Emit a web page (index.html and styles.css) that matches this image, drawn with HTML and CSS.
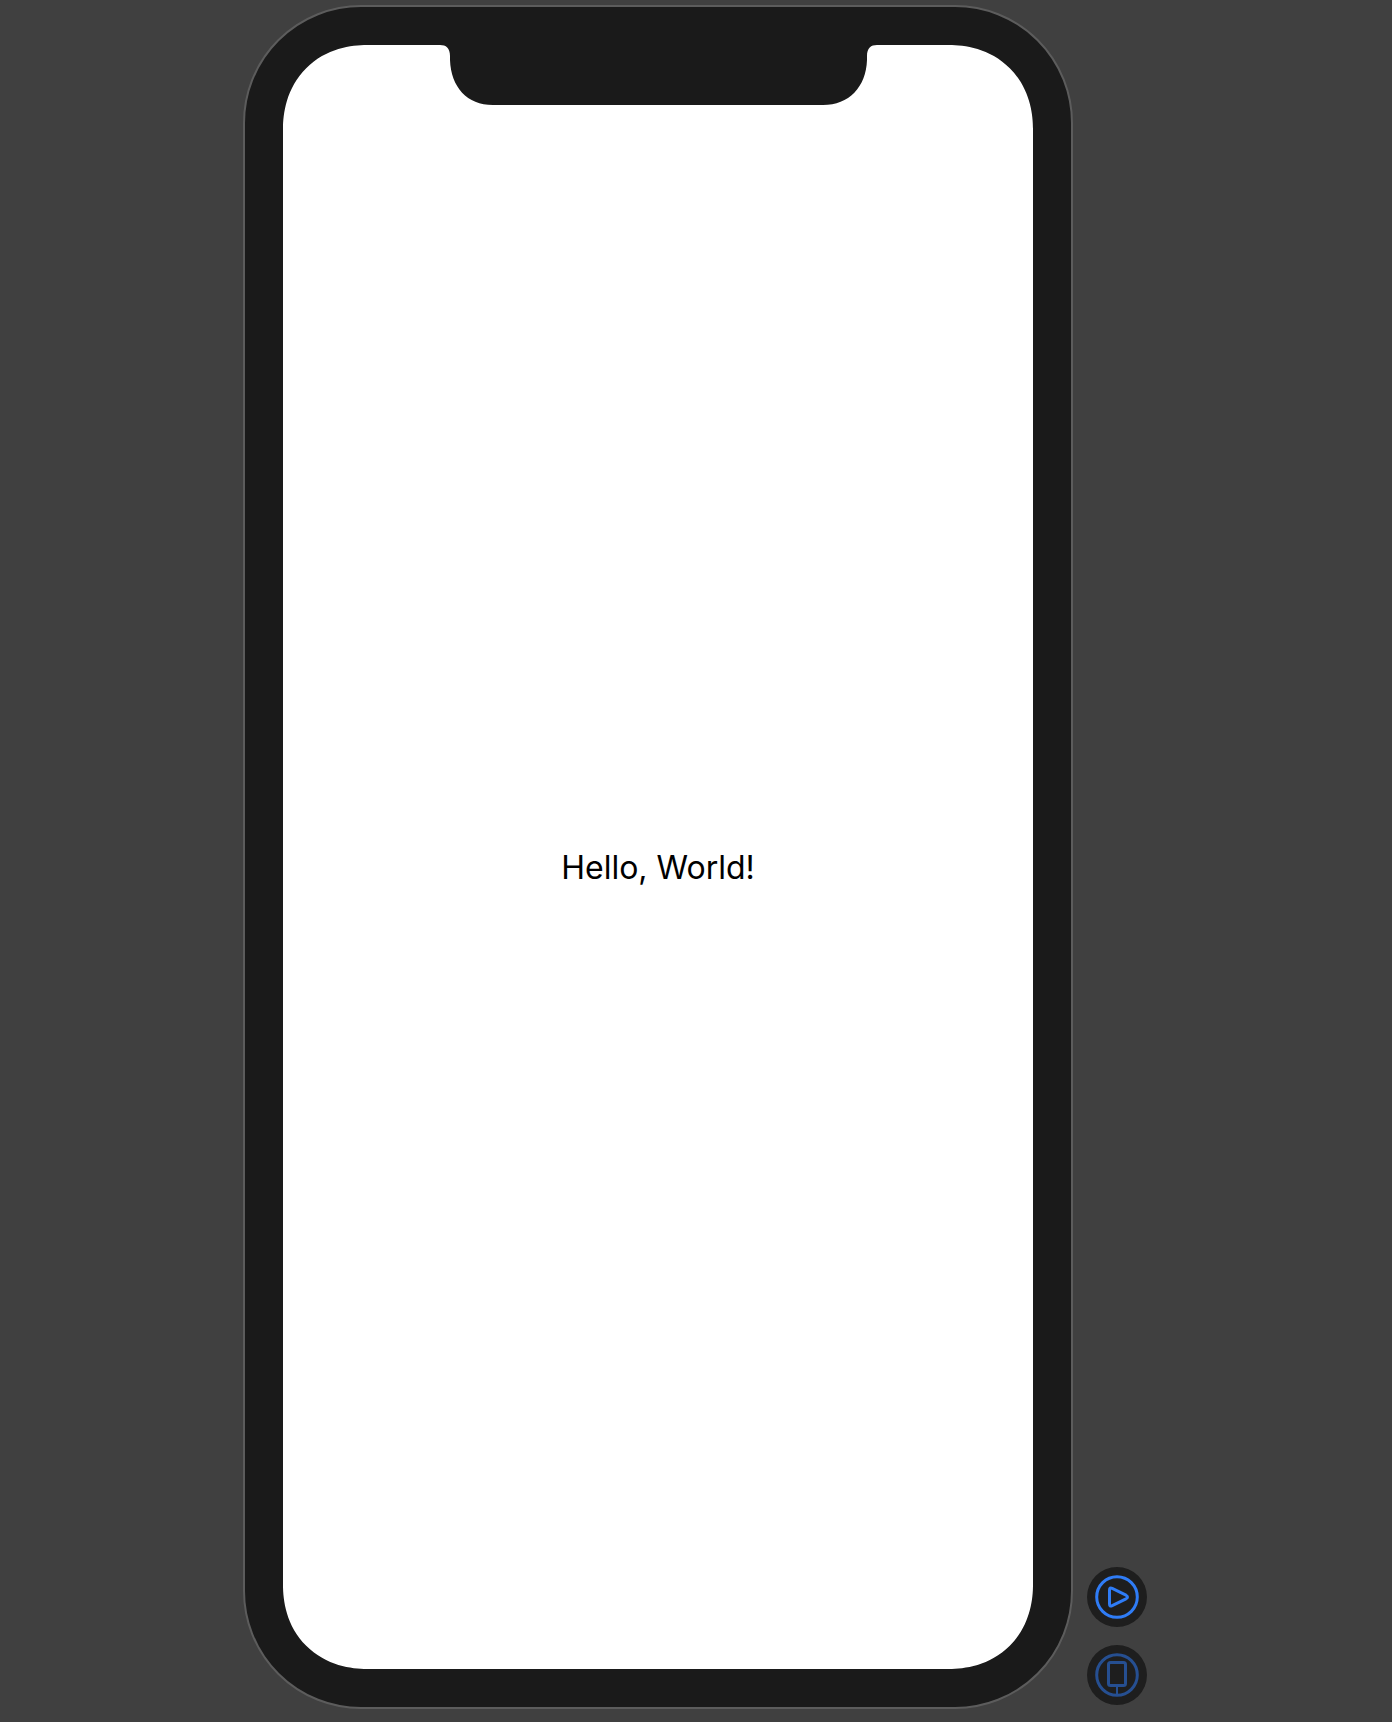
FILE: index.html
```html
<!DOCTYPE html>
<html lang="en">
<head>
<meta charset="utf-8">
<meta name="viewport" content="width=device-width, initial-scale=1">
<title>Preview</title>
<link rel="stylesheet" href="styles.css">
</head>
<body>
<main class="canvas">
  <section class="device" aria-label="Device preview">
    <div class="screen">
      <svg class="notch" width="440" height="60" viewBox="0 0 440 60" aria-hidden="true">
        <path d="M2 0C8 0 12 3 12 11V15C13 42 29 60 55 60H385C411 60 428 42 429 15V11C429 3 433 0 439 0Z"/>
      </svg>
      <p class="greeting">Hello, World!</p>
    </div>
  </section>
  <div class="actions">
    <button class="action" type="button" aria-label="Live preview">
      <svg width="60" height="60" viewBox="0 0 60 60" fill="none" stroke="currentColor" stroke-width="3" stroke-linejoin="round">
        <circle cx="30" cy="30" r="20.3"/>
        <path d="M22.5 23Q22.5 20 25.2 21.3L39 28.2Q42 30 39 31.8L25.2 38.7Q22.5 40 22.5 37Z"/>
      </svg>
    </button>
    <button class="action action-dim" type="button" aria-label="Preview on device">
      <svg width="60" height="60" viewBox="0 0 60 60" fill="none" stroke="currentColor" stroke-width="3">
        <circle cx="30" cy="30" r="20.3"/>
        <rect x="21.5" y="17.5" width="17" height="23" rx="2"/>
        <path d="M30 41V50" stroke-width="2"/>
      </svg>
    </button>
  </div>
</main>
</body>
</html>
```
FILE: styles.css
```css
* { box-sizing: border-box; }

body {
  margin: 0;
  background: #404040;
  font-family: Inter, "Liberation Sans", sans-serif;
}

.canvas {
  display: flex;
  justify-content: center;
  align-items: flex-end;
  gap: 14px;
  min-height: 100vh;
  padding: 5px 2px 13px;
  padding-right: 4px;
}

.device {
  flex: 0 1 830px;
  padding: 38px;
  border: 2px solid #5c5c5c;
  border-radius: 118px;
  background: #1a1a1a;
}

.screen {
  display: flex;
  flex-direction: column;
  align-items: center;
  position: relative;
  aspect-ratio: 750 / 1624;
  justify-content: center;
  border-radius: 84px;
  corner-shape: superellipse(1.1);
  background: #fff;
}

.notch {
  position: absolute;
  top: 0;
  fill: #1a1a1a;
}

.greeting {
  margin: 0;
  padding-top: 22px;
  color: #000;
  font-size: 32px;
  line-height: 40px;
}

.actions {
  display: flex;
  flex-direction: column;
  gap: 18px;
  padding-bottom: 4px;
}

.action {
  display: block;
  width: 60px;
  height: 60px;
  padding: 0;
  border: 0;
  border-radius: 50%;
  background: #1e1e1e;
  color: #2f7cf6;
  cursor: pointer;
}

.action svg { display: block; }

.action-dim { color: #264f91; }
```
